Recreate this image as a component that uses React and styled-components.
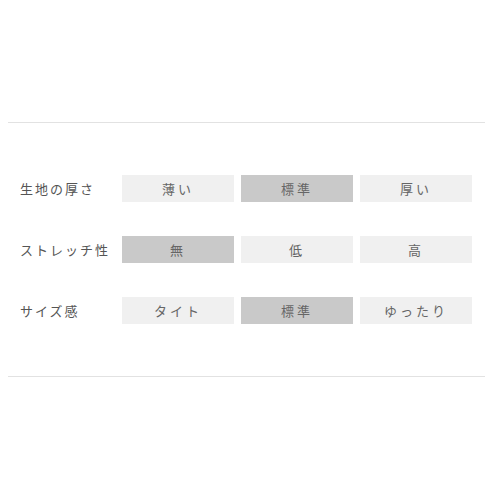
import React from 'react';
import styled, { createGlobalStyle } from 'styled-components';

const GlobalStyle = createGlobalStyle`
  body {
    margin: 0;
    background: #fff;
    font-family: "Noto Sans CJK JP", "Noto Sans", sans-serif;
  }
`;

const Section = styled.section`
  margin: 122px 15px 0 8px;
  padding: 52px 12px 52px 12px;
  border-top: 1px solid #e2e2e2;
  border-bottom: 1px solid #e2e2e2;
  display: flex;
  flex-direction: column;
  gap: 34px;
`;

const Row = styled.div`
  display: grid;
  grid-template-columns: 95px repeat(3, 112px);
  column-gap: 7px;
  align-items: center;
`;

const Label = styled.div`
  font-size: 13px;
  letter-spacing: 2px;
  color: #555;
  white-space: nowrap;
`;

const Option = styled.div`
  height: 27px;
  display: flex;
  align-items: center;
  justify-content: center;
  font-size: 13px;
  letter-spacing: 3px;
  color: #666;
  background: ${props => (props.selected ? '#c9c9c9' : '#f0f0f0')};
`;

const rows = [
  { label: '生地の厚さ', options: ['薄い', '標準', '厚い'], selected: 1 },
  { label: 'ストレッチ性', options: ['無', '低', '高'], selected: 0 },
  { label: 'サイズ感', options: ['タイト', '標準', 'ゆったり'], selected: 1 },
];

const App = () => (
  <>
    <GlobalStyle />
    <Section>
      {rows.map(row => (
        <Row key={row.label}>
          <Label>{row.label}</Label>
          {row.options.map((opt, i) => (
            <Option key={opt} selected={i === row.selected}>
              {opt}
            </Option>
          ))}
        </Row>
      ))}
    </Section>
  </>
);

export default App;
